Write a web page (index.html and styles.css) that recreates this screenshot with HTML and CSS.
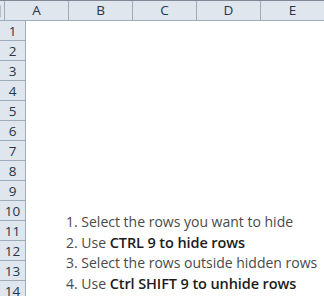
FILE: index.html
```html
<!DOCTYPE html>
<html lang="en">
<head>
    <meta charset="UTF-8">
    <title>Hide rows</title>
    <link rel="stylesheet" href="styles.css">
</head>
<body>
    <div class="sheet">
        <div class="col-heads">
            <div class="corner"><span class="tri"></span></div>
            <div class="col-head">A</div>
            <div class="col-head">B</div>
            <div class="col-head">C</div>
            <div class="col-head">D</div>
            <div class="col-head last">E</div>
        </div>
        <div class="body">
            <div class="row-heads">
                <div class="row-head">1</div>
                <div class="row-head">2</div>
                <div class="row-head">3</div>
                <div class="row-head">4</div>
                <div class="row-head">5</div>
                <div class="row-head">6</div>
                <div class="row-head">7</div>
                <div class="row-head">8</div>
                <div class="row-head">9</div>
                <div class="row-head">10</div>
                <div class="row-head">11</div>
                <div class="row-head">12</div>
                <div class="row-head">13</div>
                <div class="row-head">14</div>
            </div>
            <div class="cells">
                <ol class="steps">
                    <li>1. Select the rows you want to hide</li>
                    <li>2. Use <b>CTRL 9 to hide rows</b></li>
                    <li>3. Select the rows outside hidden rows</li>
                    <li>4. Use <b>Ctrl SHIFT 9 to unhide rows</b></li>
                </ol>
            </div>
        </div>
    </div>
</body>
</html>
```

FILE: styles.css
```css
body {
    margin: 0;
    background: #fff;
    font-family: "Liberation Sans", Arial, sans-serif;
}
.sheet {
    width: 324px;
    height: 296px;
    overflow: hidden;
    border-top: 1px solid #7f8a96;
}
.col-heads {
    display: flex;
    height: 19px;
    border-bottom: 1px solid #9eabb9;
    background: #dfe6ee;
}
.corner {
    position: relative;
    width: 25px;
    border-right: 1px solid #9eabb9;
}
.tri {
    position: absolute;
    right: 3px;
    bottom: 3px;
    width: 0;
    height: 0;
    border-left: 12px solid transparent;
    border-bottom: 12px solid #b4bcc6;
}
.col-head {
    width: 63px;
    flex-shrink: 0;
    border-right: 1px solid #9eabb9;
    text-align: center;
    font-family: "Open Sans", sans-serif;
    font-size: 13.5px;
    line-height: 19px;
    color: #27364a;
}
.col-head.last {
    border-right: none;
}
.body {
    display: flex;
}
.row-heads {
    width: 25px;
    background: #dfe6ee;
    border-right: 1px solid #9eabb9;
}
.row-head {
    height: 19px;
    border-bottom: 1px solid #9eabb9;
    text-align: center;
    font-family: "Open Sans", sans-serif;
    font-size: 13.5px;
    line-height: 20px;
    color: #27364a;
}
.cells {
    flex: 1;
}
.steps {
    list-style: none;
    margin: 191px 0 0 40px;
    padding: 0;
    font-family: "Open Sans", sans-serif;
    font-size: 14px;
    line-height: 20.6px;
    color: #4a4a4a;
    white-space: nowrap;
}
.steps b {
    font-size: 14.5px;
    font-weight: 600;
    color: #1c1c1c;
    letter-spacing: -0.1px;
}
```
